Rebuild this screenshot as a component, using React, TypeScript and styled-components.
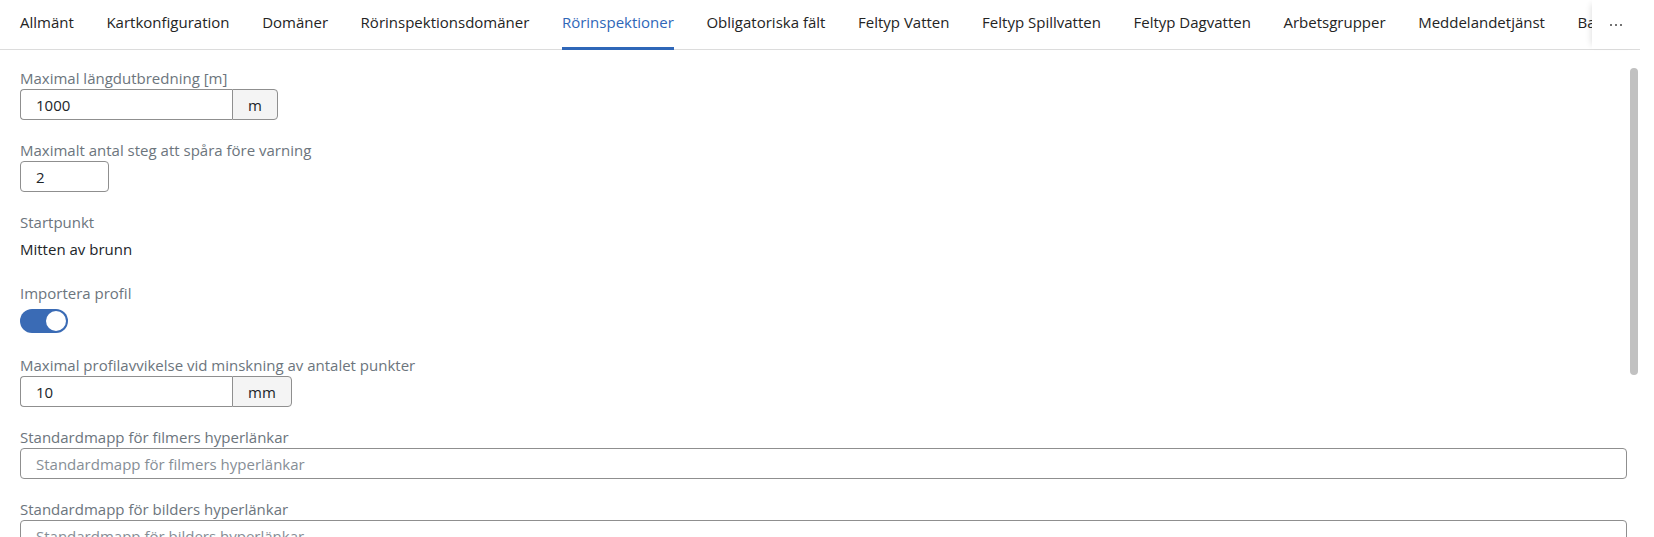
import { useState } from 'react';
import styled, { createGlobalStyle } from 'styled-components';

const GlobalStyle = createGlobalStyle`
    html, body {
        margin: 0;
        padding: 0;
        background: #fff;
        overflow: hidden;
    }
    body {
        font-family: "Open Sans", "Noto Sans", sans-serif;
        font-size: 15px;
        color: #212529;
    }
`;

const Page = styled.div`
    width: 1640px;
    height: 537px;
    display: flex;
    flex-direction: column;
`;

const TabBar = styled.div`
    position: relative;
    flex-shrink: 0;
    height: 50px;
    box-shadow: inset 0 -1px 0 #dcdcdc;
`;

const TabList = styled.div`
    display: flex;
    gap: 32.6px;
    height: 100%;
    padding-left: 20px;
    overflow: hidden;
    white-space: nowrap;
`;

const Tab = styled.div<{ $active?: boolean }>`
    position: relative;
    flex-shrink: 0;
    box-sizing: border-box;
    height: 50px;
    padding-top: 11px;
    line-height: 22px;
    color: ${p => p.$active ? '#2f67b8' : '#242424'};
    cursor: pointer;

    &::after {
        content: '';
        display: ${p => p.$active ? 'block' : 'none'};
        position: absolute;
        left: 0;
        right: 0;
        bottom: 0;
        height: 3px;
        background: #2f67b8;
    }
`;

// overflow button sits over the clipped tabs
const MorePanel = styled.div`
    position: absolute;
    top: 0;
    right: 0;
    width: 48px;
    height: 49px;
    display: flex;
    align-items: center;
    justify-content: center;
    background: #fff;
    box-shadow: -5px 0 6px -4px rgba(0, 0, 0, 0.12);
    color: #444;
`;

const Content = styled.div`
    position: relative;
    flex: 1;
    padding: 17px 13px 0 20px;
    overflow: hidden;
`;

const ScrollThumb = styled.div`
    position: absolute;
    top: 18px;
    right: 2px;
    width: 8px;
    height: 307px;
    border-radius: 4px;
    background: #c1c1c1;
`;

const Form = styled.div`
    display: flex;
    flex-direction: column;
    gap: 19px;
`;

const Field = styled.div`
    display: flex;
    flex-direction: column;
    align-items: flex-start;
`;

const Label = styled.label`
    line-height: 22px;
    color: #6c757d;
`;

const InputGroup = styled.div<{ $full?: boolean }>`
    display: flex;
    align-self: ${p => p.$full ? 'stretch' : 'flex-start'};
`;

const TextInput = styled.input<{ $width?: number; $grouped?: boolean }>`
    box-sizing: border-box;
    width: ${p => p.$width ? `${p.$width}px` : '100%'};
    height: 31px;
    padding: 0 15px;
    border: 1px solid #8f8f8f;
    border-right: ${p => p.$grouped ? 'none' : '1px solid #8f8f8f'};
    border-radius: ${p => p.$grouped ? '4px 0 0 4px' : '4px'};
    font: inherit;
    color: #212529;
    background: #fff;
    outline: none;

    &::placeholder {
        color: #868e96;
    }
`;

const Addon = styled.span`
    box-sizing: border-box;
    height: 31px;
    display: flex;
    align-items: center;
    padding: 0 15px;
    border: 1px solid #8f8f8f;
    border-radius: 0 4px 4px 0;
    background: #f4f4f4;
    color: #212529;
`;

const StaticValue = styled.div`
    padding: 5px 0 3px;
    line-height: 22px;
    color: #212529;
`;

const SwitchWrap = styled.div`
    padding: 5px 0 2px;
`;

const Switch = styled.button<{ $on: boolean }>`
    position: relative;
    display: block;
    width: 48px;
    height: 24px;
    padding: 0;
    border: none;
    border-radius: 12px;
    background: ${p => p.$on ? '#3a6bb5' : '#c4c4c4'};
    cursor: pointer;

    &::after {
        content: '';
        position: absolute;
        top: 2px;
        left: ${p => p.$on ? '26px' : '2px'};
        width: 20px;
        height: 20px;
        border-radius: 50%;
        background: #fff;
    }
`;

const tabs = [
    'Allmänt',
    'Kartkonfiguration',
    'Domäner',
    'Rörinspektionsdomäner',
    'Rörinspektioner',
    'Obligatoriska fält',
    'Feltyp Vatten',
    'Feltyp Spillvatten',
    'Feltyp Dagvatten',
    'Arbetsgrupper',
    'Meddelandetjänst',
    'Bakgrundskartor',
];

function Dots() {
    return (
        <svg width="14" height="4" viewBox="0 0 14 4">
            <circle cx="2" cy="2" r="1" fill="currentColor" />
            <circle cx="7" cy="2" r="1" fill="currentColor" />
            <circle cx="12" cy="2" r="1" fill="currentColor" />
        </svg>
    );
}

function App() {
    const [active, setActive] = useState(4);
    const [importProfile, setImportProfile] = useState(true);

    return (
        <Page>
            <GlobalStyle />
            <TabBar>
                <TabList>
                    {tabs.map((t, i) => (
                        <Tab key={t} $active={i === active} onClick={() => setActive(i)}>{t}</Tab>
                    ))}
                </TabList>
                <MorePanel><Dots /></MorePanel>
            </TabBar>

            <Content>
                <Form>
                    <Field>
                        <Label>Maximal längdutbredning [m]</Label>
                        <InputGroup>
                            <TextInput $width={212} $grouped defaultValue="1000" />
                            <Addon>m</Addon>
                        </InputGroup>
                    </Field>
                    <Field>
                        <Label>Maximalt antal steg att spåra före varning</Label>
                        <TextInput $width={89} defaultValue="2" />
                    </Field>
                    <Field>
                        <Label>Startpunkt</Label>
                        <StaticValue>Mitten av brunn</StaticValue>
                    </Field>
                    <Field>
                        <Label>Importera profil</Label>
                        <SwitchWrap>
                            <Switch
                                role="switch"
                                aria-checked={importProfile}
                                $on={importProfile}
                                onClick={() => setImportProfile(!importProfile)}
                            />
                        </SwitchWrap>
                    </Field>
                    <Field>
                        <Label>Maximal profilavvikelse vid minskning av antalet punkter</Label>
                        <InputGroup>
                            <TextInput $width={212} $grouped defaultValue="10" />
                            <Addon>mm</Addon>
                        </InputGroup>
                    </Field>
                    <Field>
                        <Label>Standardmapp för filmers hyperlänkar</Label>
                        <InputGroup $full>
                            <TextInput placeholder="Standardmapp för filmers hyperlänkar" />
                        </InputGroup>
                    </Field>
                    <Field>
                        <Label>Standardmapp för bilders hyperlänkar</Label>
                        <InputGroup $full>
                            <TextInput placeholder="Standardmapp för bilders hyperlänkar" />
                        </InputGroup>
                    </Field>
                </Form>
                <ScrollThumb />
            </Content>
        </Page>
    );
}

export default App;
